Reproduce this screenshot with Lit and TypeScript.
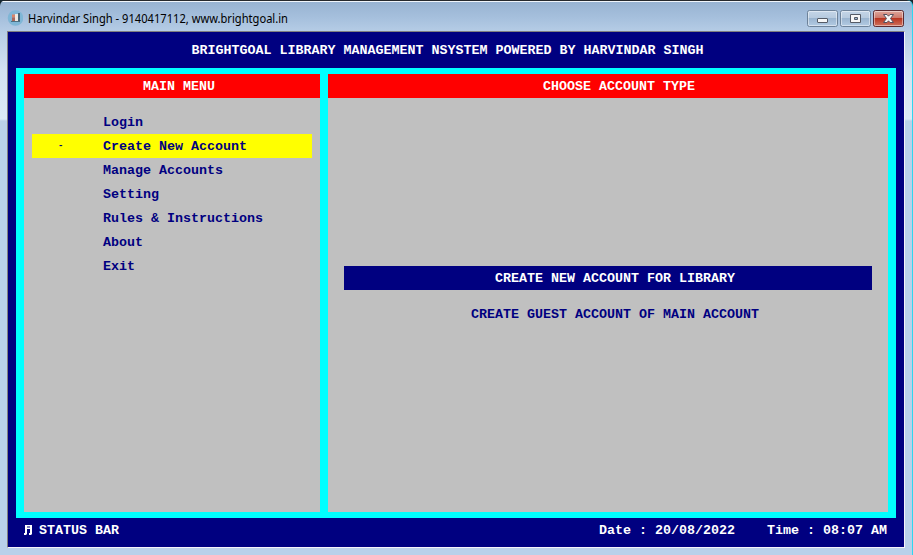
import { LitElement, html, css, svg } from "lit";
import { customElement, state } from "lit/decorators.js";
import { classMap } from "lit/directives/class-map.js";

@customElement("app-root")
class AppRoot extends LitElement {
  static styles = css`
    :host { display: block; height: 555px; overflow: hidden; background: #14252f; }
    * { box-sizing: border-box; }
    .window {
      height: 555px; display: flex; flex-direction: column;
      background: linear-gradient(#26282c 0 1px, #f0f5fb 1px 2px, #98b3d2 2px, #a6c0dd 18px, #b5cce5 31px, #d3e2f2 70px, #dce9f6 119px, #b9d1ea 121px);
      border-right: 1px solid #2fd6ee; border-radius: 6px 6px 0 0;
      padding: 0 7px 7px 7px;
    }
    .title { height: 31px; padding-top: 10px; flex: none; display: flex; align-items: flex-start; }
    .appicon { width: 16px; height: 16px; display: block; }
    .caption { flex: 1; margin-left: 5px; font: 12px/17px "Noto Sans", "Open Sans", sans-serif; color: #000; white-space: nowrap; }
    .caption svg { display: block; overflow: visible; }
    .buttons { display: flex; gap: 2px; margin-right: 1px; }
    .buttons svg { display: block; width: 31px; height: 17px; }
    .client {
      flex: 1; background: #000080; display: flex; flex-direction: column; padding: 0 8px;
      border: 1px solid; border-color: #807f80 #f5f3fa #f5f3fa #807f80;
      font: bold 13.333px/24px "Liberation Mono", monospace; color: #fff; white-space: pre;
    }
    .heading { height: 36px; padding: 7px 17px 0 0; text-align: center; flex: none; }
    .frame { height: 450px; background: #0ff; padding: 6px 8px; display: flex; gap: 8px; flex: none; }
    .panel { background: #c0c0c0; color: #000080; display: flex; flex-direction: column; }
    .menu { width: 296px; }
    .choices { flex: 1; }
    .bar { background: #f00; color: #fff; height: 24px; padding: 1px 0 0 14px; text-align: center; }
    .choices .bar { padding-left: 22px; }
    .list { padding: 12px 8px; }
    .item { height: 24px; display: flex; padding-top: 1px; }
    .mark { width: 71px; padding-left: 26px; font-size: 9px; line-height: 22px; }
    .item.on { background: #ff0; }
    .options { padding: 168px 16px 0; display: flex; flex-direction: column; gap: 12px; text-align: center; }
    .option { height: 24px; padding: 1px 0 0 14px; }
    .option.on { background: #000080; color: #fff; }
    .status { display: flex; padding: 1px 9px 0 8px; height: 24px; }
    .note { width: 15px; height: 24px; }
    .grow { flex: 1; }
  `;

  @state() selected = 1;
  @state() choice = 0;

  items = ["Login", "Create New Account", "Manage Accounts", "Setting", "Rules & Instructions", "About", "Exit"];
  options = ["CREATE NEW ACCOUNT FOR LIBRARY", "CREATE GUEST ACCOUNT OF MAIN ACCOUNT"];

  button(kind: string) {
    const close = kind === "close";
    const id = "g-" + kind;
    return html`<svg viewBox="0 0 31 17">
      <defs><linearGradient id=${id} x1="0" y1="0" x2="0" y2="1">
        <stop offset="0" stop-color=${close ? "#dfa99f" : "#c5d6e8"}></stop>
        <stop offset=".48" stop-color=${close ? "#cc7769" : "#b6cade"}></stop>
        <stop offset=".5" stop-color=${close ? "#b93622" : "#9bb5d0"}></stop>
        <stop offset="1" stop-color=${close ? "#d07561" : "#b4cce4"}></stop>
      </linearGradient></defs>
      <rect x=".5" y=".5" width="30" height="16" rx="2" fill="url(#${id})" stroke=${close ? "#5b2a30" : "#6d8299"}></rect>
      <rect x="1.5" y="1.5" width="28" height="14" rx="1" fill="none" stroke="#fff" stroke-opacity=".45"></rect>
      ${kind === "min" ? svg`<rect x="10.5" y="8.5" width="10" height="4" rx=".5" fill="#f7f7f7" stroke="#555b66"/>` : ""}
      ${kind === "max" ? svg`<path fill-rule="evenodd" d="M10.500 4.500h10v8h-10zM14.500 7.500h3v2h-3z" fill="#f7f7f7" stroke="#555b66"/>` : ""}
      ${close ? svg`<path d="M10.500 4.500h3.500l1.500 1.700 1.500-1.700h3.500l-3 4 3 4h-3.500l-1.500-1.700-1.500 1.700h-3.500l3-4z" fill="#f7f7f7" stroke="#55515f"/>` : ""}
    </svg>`;
  }

  render() {
    return html`<div class="window">
      <div class="title">
        <svg class="appicon" viewBox="0 0 16 16">
          <circle cx="8.500" cy="8" r="7.800" fill="#7fb6d6"></circle>
          <path d="M5 4.500h3v3H5z" fill="#d98468"></path><path d="M5 7.500h3v3.500H5z" fill="#a9685c"></path><path d="M8 4h3v7H8z" fill="#eee9e2"></path>
          <path d="M11 3h2v8h-2z" fill="#456577"></path><path d="M4 11h9v1H4z" fill="#4c7184"></path>
        </svg>
        <div class="caption"><svg width="264" height="17"><text x="0" y="12.500" textLength="260" lengthAdjust="spacingAndGlyphs">Harvindar Singh - 9140417112, www.brightgoal.in</text></svg></div>
        <div class="buttons">${this.button("min")}${this.button("max")}${this.button("close")}</div>
      </div>
      <div class="client">
        <div class="heading">BRIGHTGOAL LIBRARY MANAGEMENT NSYSTEM POWERED BY HARVINDAR SINGH</div>
        <div class="frame">
          <div class="panel menu">
            <div class="bar">MAIN MENU</div>
            <div class="list">${this.items.map((t, i) => html`<div class=${classMap({ item: true, on: i === this.selected })} @click=${() => (this.selected = i)}><span class="mark">${i === this.selected ? "-" : ""}</span><span>${t}</span></div>`)}</div>
          </div>
          <div class="panel choices">
            <div class="bar">CHOOSE ACCOUNT TYPE</div>
            <div class="options">${this.options.map((t, i) => html`<div class=${classMap({ option: true, on: i === this.choice })} @click=${() => (this.choice = i)}>${t}</div>`)}</div>
          </div>
        </div>
        <div class="status"><svg class="note" viewBox="0 0 15 24"><path d="M1 6h7v9l-1 1H5v-2h1v-4H3v5l-1 1H0v-2h1zM3 7.500v1h3v-1z" fill="#fff" fill-rule="evenodd"></path></svg><span>STATUS BAR</span><span class="grow"></span><span>Date : 20/08/2022    Time : 08:07 AM</span></div>
      </div>
    </div>`;
  }
}
